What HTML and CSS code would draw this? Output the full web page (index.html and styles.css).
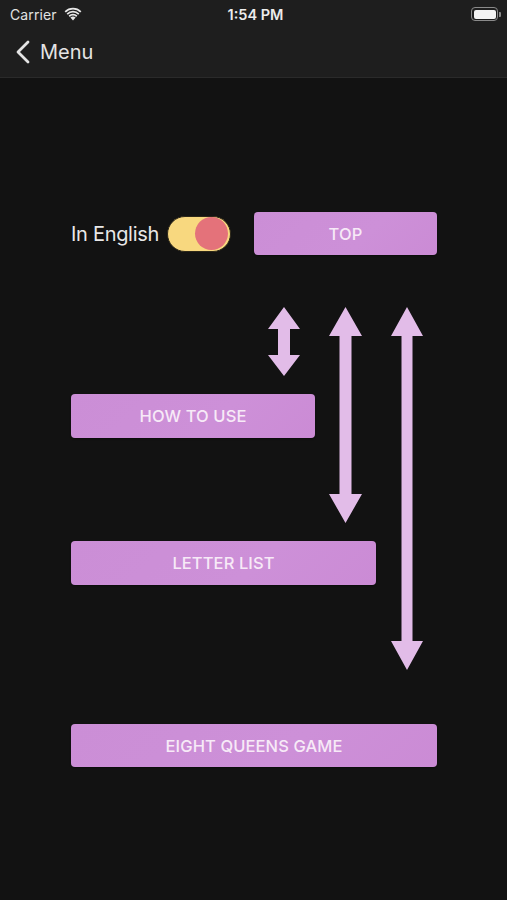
FILE: index.html
```html
<!DOCTYPE html>
<html lang="en">
<head>
<meta charset="utf-8">
<title>Menu</title>
<link rel="stylesheet" href="styles.css">
</head>
<body>
<div class="screen">
  <header class="top-bar">
    <div class="status-bar">
      <div class="status-left">
        <span class="carrier">Carrier</span>
        <svg class="wifi" width="18" height="14" viewBox="0 0 18 14">
          <path d="M9 13.5 L6.4 10.6 A3.8 3.8 0 0 1 11.6 10.6 Z" fill="#e8e8e8"/>
          <path d="M4.6 8.6 A6.4 6.4 0 0 1 13.4 8.6 L12.2 9.9 A4.6 4.6 0 0 0 5.8 9.9 Z" fill="#e8e8e8"/>
          <path d="M2.6 6.4 A9.3 9.3 0 0 1 15.4 6.4 L14.2 7.7 A7.5 7.5 0 0 0 3.8 7.7 Z" fill="#e8e8e8"/>
          <path d="M0.6 4.2 A12.2 12.2 0 0 1 17.4 4.2 L16.2 5.5 A10.4 10.4 0 0 0 1.8 5.5 Z" fill="#e8e8e8"/>
        </svg>
      </div>
      <span class="clock">1:54 PM</span>
      <div class="battery">
        <span class="battery-body"><span class="battery-level"></span></span>
        <span class="battery-cap"></span>
      </div>
    </div>
    <nav class="nav-bar">
      <a class="back" href="#">
        <svg class="chevron" width="16" height="24" viewBox="0 0 16 24">
          <path d="M13 2 L3 12 L13 22" fill="none" stroke="#e4e4e4" stroke-width="2.8" stroke-linecap="round" stroke-linejoin="round"/>
        </svg>
        <span>Menu</span>
      </a>
    </nav>
  </header>

  <main class="menu">
    <div class="row first-row">
      <label class="lang">
        <span class="lang-label">In English</span>
        <span class="switch"><span class="knob"></span></span>
      </label>
      <button class="menu-btn btn-top">TOP</button>
    </div>
    <button class="menu-btn btn-howto">HOW TO USE</button>
    <button class="menu-btn btn-letters">LETTER LIST</button>
    <button class="menu-btn btn-queens">EIGHT QUEENS GAME</button>

    <!-- navigation links between the menu items -->
    <svg class="links" width="507" height="821" viewBox="0 79 507 821">
      <polygon class="arrow" points="284,308 300,330 290,330 290,356 300,356 284,377 268,356 278,356 278,330 268,330"/>
      <polygon class="arrow" points="345.5,308 362,337 351.5,337 351.5,495 362,495 345.5,524 329,495 339.5,495 339.5,337 329,337"/>
      <polygon class="arrow" points="407,308 423,337 412.5,337 412.5,642 423,642 407,671 391,642 401.5,642 401.5,337 391,337"/>
    </svg>
  </main>
</div>
</body>
</html>
```

FILE: styles.css
```css
* {
  box-sizing: border-box;
}

html, body {
  margin: 0;
  padding: 0;
  background: #121212;
}

body {
  font-family: "Inter", "Roboto", "Liberation Sans", sans-serif;
  color: #e6e6e6;
}

.screen {
  width: 507px;
  min-height: 900px;
  display: flex;
  flex-direction: column;
}

/* status bar + navigation bar */
.top-bar {
  background: #1e1e1e;
  border-bottom: 1px solid #2a2a2a;
}

.status-bar {
  height: 28px;
  display: grid;
  grid-template-columns: 1fr auto 1fr;
  align-items: center;
  padding: 0 6px 0 10px;
}

.status-left {
  display: flex;
  align-items: center;
  gap: 7px;
}

.carrier {
  font-size: 14px;
  color: #e2e2e2;
  letter-spacing: 0.1px;
}

.wifi {
  display: block;
  margin-top: -1px;
}

.clock {
  font-size: 14.5px;
  font-weight: 600;
  color: #ececec;
}

.battery {
  justify-self: end;
  display: flex;
  align-items: center;
}

.battery-body {
  width: 27px;
  height: 14px;
  border: 1.5px solid #8a8a8a;
  border-radius: 4px;
  padding: 1.5px;
  display: flex;
}

.battery-level {
  flex: 1;
  background: #f4f4f4;
  border-radius: 2px;
}

.battery-cap {
  width: 2px;
  height: 5px;
  margin-left: 1px;
  background: #8a8a8a;
  border-radius: 0 1px 1px 0;
}

.nav-bar {
  height: 49px;
  display: flex;
  align-items: center;
  padding-left: 15px;
}

.back {
  display: flex;
  align-items: center;
  gap: 9px;
  text-decoration: none;
  color: #e4e4e4;
  font-size: 20px;
  margin-top: -1px;
}

.chevron {
  display: block;
}

/* menu body */
.menu {
  position: relative;
  flex: 1;
  display: flex;
  flex-direction: column;
  align-items: flex-start;
  padding: 134px 0 0 71px;
}

.row {
  display: flex;
  align-items: center;
}

.lang {
  display: flex;
  align-items: center;
  gap: 8px;
  margin-right: 23px;
}

.lang-label {
  font-size: 20px;
  color: #e8e8e8;
  letter-spacing: -0.3px;
}

.switch {
  width: 64px;
  height: 36px;
  border-radius: 18px;
  background: #f8d87f;
  border: 1px solid #2b2618;
  display: flex;
  align-items: center;
  justify-content: flex-end;
  padding-right: 2px;
}

.knob {
  width: 33px;
  height: 33px;
  border-radius: 50%;
  background: #e4727a;
}

.menu-btn {
  height: 43px;
  border: none;
  border-radius: 4px;
  background: linear-gradient(135deg, #cb8ed6, #cd90d8 60%, #cb8bd5);
  color: #f7eaf7;
  font-family: "Inter", "Roboto", "Liberation Sans", sans-serif;
  font-size: 16.5px;
  font-weight: 500;
  letter-spacing: 0.1px;
  padding: 0;
  box-shadow: 0 1px 2px rgba(0, 0, 0, 0.4);
}

.btn-top {
  width: 183px;
}

.btn-howto {
  width: 244px;
  height: 44px;
  margin-top: 139px;
}

.btn-letters {
  width: 305px;
  height: 44px;
  margin-top: 103px;
}

.btn-queens {
  width: 366px;
  margin-top: 139px;
}

.links {
  position: absolute;
  left: 0;
  top: 0;
  pointer-events: none;
}

.arrow {
  fill: #e2bce8;
}
```
